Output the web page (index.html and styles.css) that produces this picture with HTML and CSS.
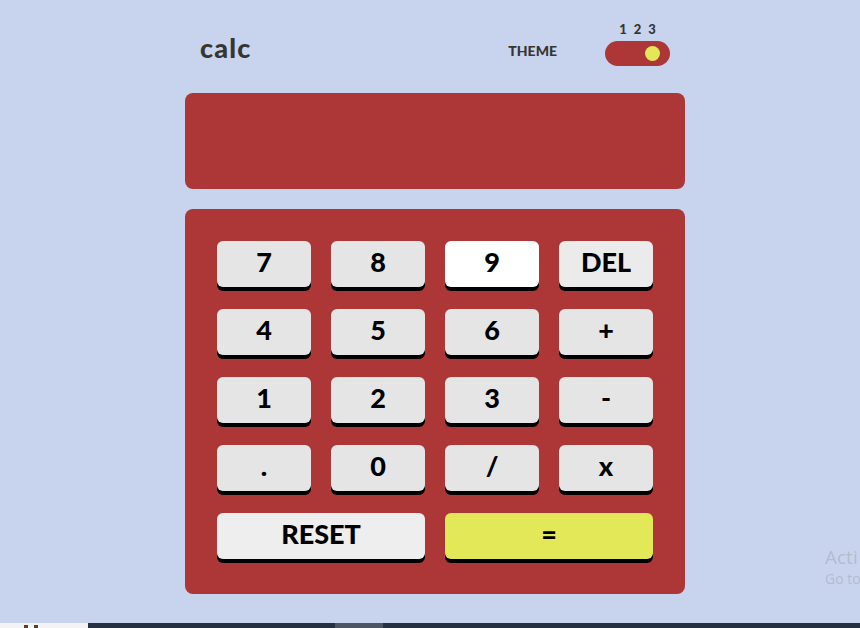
FILE: index.html
```html
<!DOCTYPE html>
<html lang="en">
<head>
<meta charset="utf-8">
<title>calc</title>
<link rel="stylesheet" href="styles.css">
</head>
<body>
<div class="page">
  <main class="calc">
    <header class="header">
      <h1 class="logo">calc</h1>
      <div class="theme">
        <span class="theme-label">THEME</span>
        <div class="switch-wrap">
          <div class="switch-nums"><span>1</span><span>2</span><span>3</span></div>
          <div class="switch"><span class="knob"></span></div>
        </div>
      </div>
    </header>
    <section class="display"></section>
    <section class="keypad">
      <button class="key">7</button>
      <button class="key">8</button>
      <button class="key key-white">9</button>
      <button class="key key-del">DEL</button>
      <button class="key">4</button>
      <button class="key">5</button>
      <button class="key">6</button>
      <button class="key">+</button>
      <button class="key">1</button>
      <button class="key">2</button>
      <button class="key">3</button>
      <button class="key">-</button>
      <button class="key">.</button>
      <button class="key">0</button>
      <button class="key">/</button>
      <button class="key">x</button>
      <button class="key key-wide key-reset">RESET</button>
      <button class="key key-wide key-eq">=</button>
    </section>
  </main>
</div>
<div class="watermark">
  <div class="wm-title">Acti</div>
  <div class="wm-sub">Go to</div>
</div>
<div class="taskbar">
  <div class="tb-start"><span class="tb-icon"></span></div>
  <div class="tb-bar"><span class="tb-active"></span></div>
</div>
</body>
</html>
```

FILE: styles.css
```css
* { box-sizing: border-box; }
html, body { margin: 0; padding: 0; }
body {
  background: #c8d3ee;
  font-family: "Lato", "Liberation Sans", sans-serif;
  width: 860px;
  height: 628px;
  overflow: hidden;
}
.page {
  width: 510px;
  margin: 0 auto;
  padding-left: 10px;
  padding-top: 20px;
}
.calc { width: 500px; }
.header {
  height: 46px;
  display: flex;
  align-items: flex-end;
  justify-content: space-between;
  padding: 0 15px;
}
.logo {
  margin: 0 0 3px 0;
  font-size: 27px;
  font-weight: 900;
  color: #36352f;
  line-height: 30px;
  letter-spacing: 1.2px;
}
.theme {
  display: flex;
  align-items: flex-end;
  gap: 48px;
}
.theme-label {
  font-size: 14px;
  font-weight: 900;
  color: #36352f;
  line-height: 16px;
  margin-bottom: 7px;
}
.switch-wrap {
  display: flex;
  flex-direction: column;
  align-items: center;
  gap: 5px;
}
.switch-nums {
  display: flex;
  gap: 7px;
  font-size: 13px;
  font-weight: 900;
  color: #36352f;
  line-height: 14px;
}
.switch {
  width: 65px;
  height: 25px;
  border-radius: 13px;
  background: #ad3637;
  display: flex;
  align-items: center;
  justify-content: flex-end;
  padding-right: 10px;
}
.knob {
  width: 15px;
  height: 15px;
  border-radius: 50%;
  background: #e2e858;
}
.display {
  margin-top: 27px;
  height: 96px;
  background: #ad3637;
  border-radius: 8px;
}
.keypad {
  margin-top: 20px;
  background: #ad3637;
  border-radius: 8px;
  padding: 32px 32px 35px 32px;
  display: grid;
  grid-template-columns: repeat(4, 94px);
  grid-auto-rows: 46px;
  column-gap: 20px;
  row-gap: 22px;
}
.key {
  border: none;
  margin: 0;
  padding: 0 0 4px 0;
  background: #e5e5e5;
  border-radius: 6px;
  box-shadow: 0 4px 0 #000;
  font-family: "Lato", "Liberation Sans", sans-serif;
  font-size: 27px;
  font-weight: 900;
  color: #000;
  line-height: 42px;
  text-align: center;
}
.key-white { background: #ffffff; }
.key-del { background: #ebebeb; }
.key-wide { grid-column: span 2; }
.key-reset { background: #eeeeee; }
.key-eq { background: #e2e858; }

.watermark {
  position: fixed;
  left: 825px;
  top: 545px;
  white-space: nowrap;
  color: #b3bbcc;
  font-family: "Open Sans", "Liberation Sans", sans-serif;
}
.wm-title { font-size: 19px; line-height: 24px; }
.wm-sub { font-size: 14px; line-height: 20px; }

.taskbar {
  position: fixed;
  left: 0;
  bottom: 0;
  width: 860px;
  height: 5px;
  display: flex;
}
.tb-start {
  width: 88px;
  background: #f3f3f3;
  position: relative;
}
.tb-icon {
  position: absolute;
  left: 24px;
  top: 2px;
  width: 14px;
  height: 3px;
  border-left: 4px solid #5a3e32;
  border-right: 4px solid #5a3e32;
}
.tb-bar {
  flex: 1;
  background: #253141;
  position: relative;
}
.tb-active {
  position: absolute;
  left: 247px;
  top: 0;
  width: 48px;
  height: 5px;
  background: #4b5563;
}
```
